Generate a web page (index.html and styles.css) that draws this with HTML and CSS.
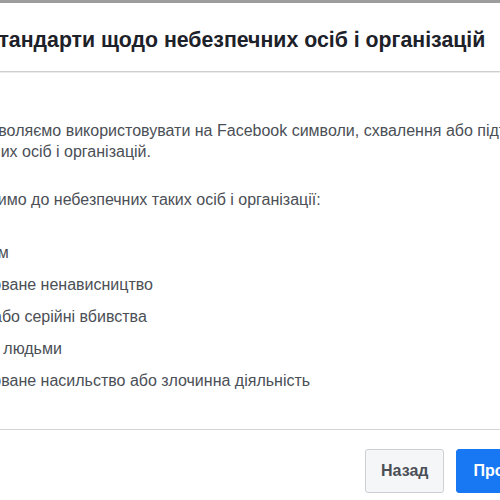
FILE: index.html
```html
<!DOCTYPE html>
<html lang="uk">
<head>
  <meta charset="UTF-8" />
  <meta name="viewport" content="width=device-width, initial-scale=1" />
  <title>Стандарти спільноти</title>
  <link rel="stylesheet" href="styles.css">
</head>
<body>
  <div class="topbar"></div>

  <div class="dialog">
    <div class="dialog-header">
      <h1 class="dialog-title">Стандарти щодо небезпечних осіб і організацій</h1>
    </div>

    <div class="dialog-body">
      <p class="intro">Ми не дозволяємо використовувати на Facebook символи, схвалення або підтримку<br>небезпечних осіб і організацій.</p>
      <p class="lead">Ми відносимо до небезпечних таких осіб і організації:</p>
      <ul class="danger-list">
        <li>Тероризм</li>
        <li>Організоване ненависництво</li>
        <li>Масові або серійні вбивства</li>
        <li>Торгівля людьми</li>
        <li>Організоване насильство або злочинна діяльність</li>
      </ul>
    </div>

    <div class="dialog-footer">
      <button class="btn btn-back">Назад</button>
      <button class="btn btn-next">Продовжити</button>
    </div>
  </div>
</body>
</html>
```

FILE: styles.css
```css
body {
  font-family: 'Liberation Sans', Arial, sans-serif;
  margin: 0;
  background: white;
  overflow: hidden;
  width: 500px;
  height: 500px;
}

.topbar {
  height: 3px;
  background: #9d9d9d;
}

.dialog {
  margin-left: -80px;
  width: 720px;
  background: white;
}

.dialog-header {
  padding: 24px 16px 18px 63px;
  border-bottom: 1px solid #cfcfcf;
  box-shadow: 0 1px 0 #ececec;
}

.dialog-title {
  margin: 0;
  font-size: 21.3px;
  line-height: 26px;
  font-weight: 700;
  color: #1d2129;
}

.dialog-body {
  padding: 48px 16px 32px 4px;
  color: #4b4f56;
  font-size: 16px;
  border-bottom: 1px solid #d4d4d4;
}

.intro {
  margin: 0;
  line-height: 21px;
  white-space: nowrap;
}

.lead {
  margin: 27px 0 0;
  line-height: 21px;
}

.danger-list {
  list-style: none;
  margin: 27px 0 0;
  padding: 0 0 0 13px;
}

.danger-list li {
  line-height: 32px;
}

.dialog-footer {
  display: flex;
  gap: 12px;
  padding: 19px 0 20px 445px;
}

.btn {
  height: 44px;
  padding: 0 15px;
  border-radius: 3px;
  font-family: inherit;
  font-size: 16px;
  font-weight: 700;
  cursor: pointer;
}

.btn-back {
  background: #f5f6f7;
  border: 1px solid #ccd0d5;
  color: #4b4f56;
}

.btn-next {
  background: #1877f2;
  border: 1px solid #1877f2;
  color: white;
  padding: 0 16px;
}
```
